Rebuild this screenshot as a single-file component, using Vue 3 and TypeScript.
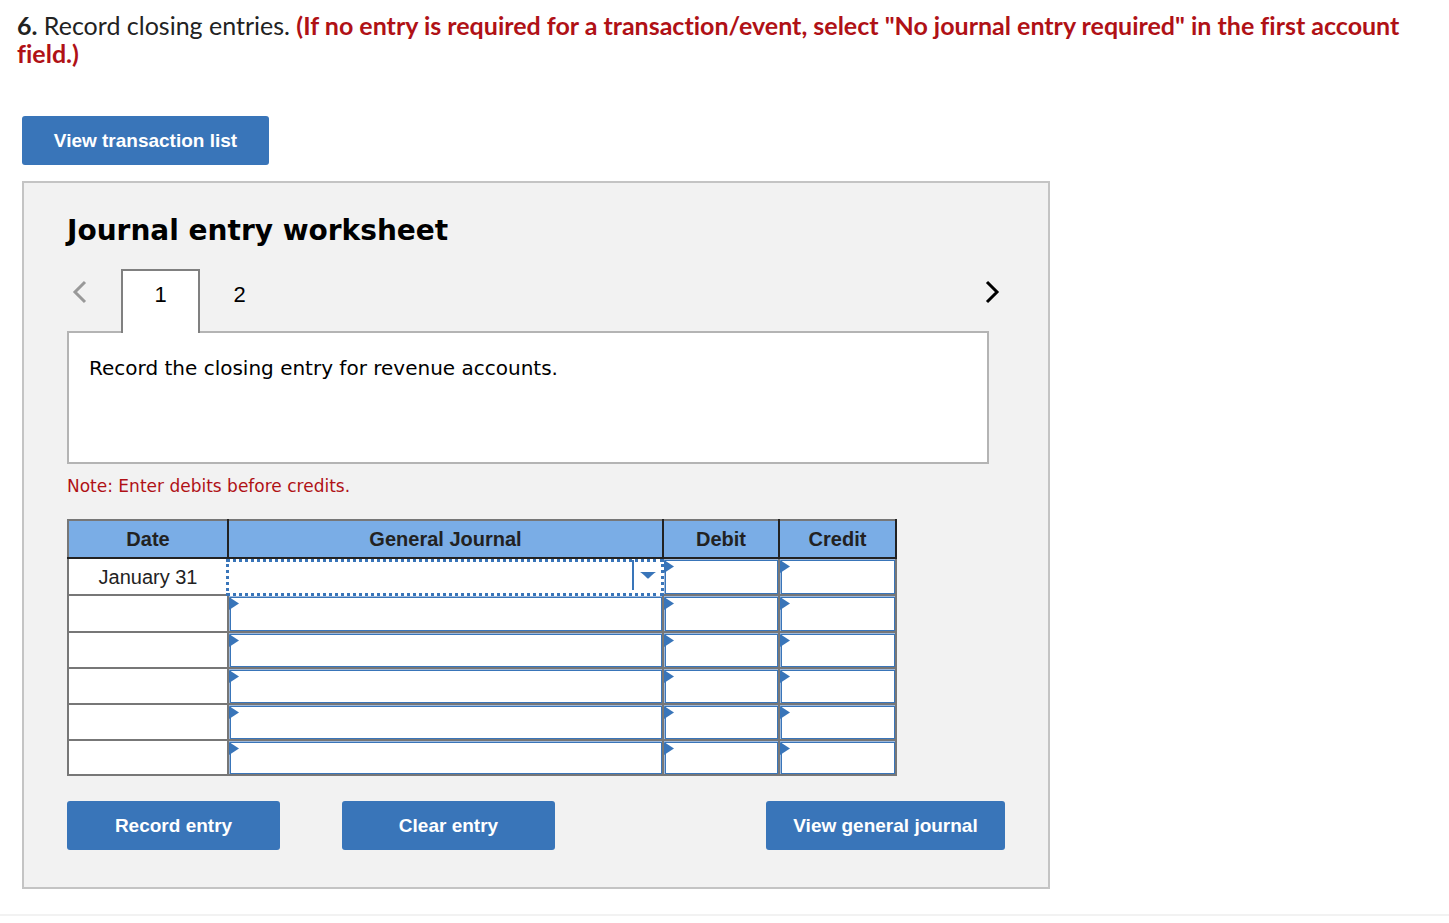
<script setup lang="ts">
import { ref } from 'vue'

const tabs: string[] = ['1', '2']
const activeTab = ref('1')
const dates: string[] = ['January 31', '', '', '', '', '']
const account = ref('')
</script>

<template>
  <main class="page">
    <p class="prompt">
      <b>6.</b> Record closing entries.
      <b class="hint">(If no entry is required for a transaction/event, select "No journal entry required" in the first account field.)</b>
    </p>

    <div class="work">
      <button type="button" class="btn list-btn">View transaction list</button>

      <section class="panel">
        <h1>Journal entry worksheet</h1>

        <nav class="tabs" aria-label="Entries">
          <button type="button" class="arrow prev" aria-label="Previous entry" disabled>
            <svg width="16" height="24" viewBox="0 0 16 24"><path d="M14 2 4 12 14 22" /></svg>
          </button>
          <button
            v-for="tab in tabs"
            :key="tab"
            type="button"
            class="tab"
            :class="{ active: tab === activeTab }"
            @click="activeTab = tab"
          >{{ tab }}</button>
          <button type="button" class="arrow next" aria-label="Next entry">
            <svg width="16" height="24" viewBox="0 0 16 24"><path d="M2 2 12 12 2 22" /></svg>
          </button>
        </nav>

        <div class="description">Record the closing entry for revenue accounts.</div>
        <p class="note">Note: Enter debits before credits.</p>

        <table>
          <colgroup>
            <col class="col-date" /><col /><col class="col-debit" /><col class="col-credit" />
          </colgroup>
          <thead>
            <tr><th>Date</th><th>General Journal</th><th>Debit</th><th>Credit</th></tr>
          </thead>
          <tbody>
            <tr v-for="(date, i) in dates" :key="i">
              <td class="date">{{ date }}</td>
              <td v-if="i === 0" class="entry">
                <div class="picker">
                  <select v-model="account" aria-label="Account, row 1">
                    <option value=""></option>
                    <option>No journal entry required</option>
                  </select>
                  <span class="divider"></span>
                  <svg class="caret" width="16" height="7" viewBox="0 0 16 7"><path d="M0 0H16Q14 1 9 6Q8 7 7 6Q2 1 0 0Z" /></svg>
                </div>
              </td>
              <td v-else class="entry marked"><input type="text" :aria-label="`Account, row ${i + 1}`" /></td>
              <td class="entry marked"><input type="text" :aria-label="`Debit, row ${i + 1}`" /></td>
              <td class="entry marked"><input type="text" :aria-label="`Credit, row ${i + 1}`" /></td>
            </tr>
          </tbody>
        </table>

        <div class="actions">
          <button type="button" class="btn">Record entry</button>
          <button type="button" class="btn">Clear entry</button>
          <button type="button" class="btn journal-btn">View general journal</button>
        </div>
      </section>
    </div>
  </main>
</template>

<style>
body {
  background: #fff;
}
</style>

<style scoped>
.page {
  padding: 11px 16px 25px 17px;
  border-bottom: 2px solid #f2f2f2;
  font-family: "Liberation Sans", Arial, sans-serif;
  color: #222;
}
.prompt {
  margin: 0;
  font: 25px/28px Lato, sans-serif;
  font-variant-ligatures: none;
}
.hint {
  color: #b01116;
}
.work {
  max-width: 1028px;
  margin: 49px 0 0 5px;
}
.btn {
  width: 213px;
  height: 49px;
  padding: 0;
  border: 0;
  border-radius: 3px;
  background: #3975b9;
  color: #fff;
  font: bold 19px/24px "Liberation Sans", Arial, sans-serif;
  cursor: pointer;
}
.list-btn {
  display: block;
  width: 247px;
}
.panel {
  box-sizing: border-box;
  margin-top: 16px;
  padding: 31px 43px 37px;
  border: 2px solid #c4c4c4;
  background: #f2f2f2;
}
h1 {
  margin: 0;
  color: #000;
  font: bold 28px/34px Verdana, "DejaVu Sans", sans-serif;
}
.tabs {
  display: flex;
  margin-top: 21px;
  height: 64px;
}
.arrow {
  display: flex;
  width: 24px;
  height: 46px;
  padding: 0;
  border: 0;
  background: none;
  align-items: center;
  justify-content: center;
}
.arrow path {
  fill: none;
  stroke: #000;
  stroke-width: 3;
}
.prev {
  margin-right: 30px;
}
.prev path {
  stroke: #999;
}
.next {
  margin-left: auto;
}
.tab {
  box-sizing: border-box;
  width: 79px;
  height: 64px;
  padding: 0 0 15px;
  border: 2px solid transparent;
  border-bottom: 0;
  background: none;
  color: #000;
  font: 22px/26px "Liberation Sans", Arial, sans-serif;
}
.tab.active {
  position: relative;
  z-index: 1;
  border-color: #808080;
  background: #fff;
}
.description {
  box-sizing: border-box;
  min-height: 133px;
  margin: -2px 16px 0 0;
  padding: 22px 20px;
  border: 2px solid #b4b4b4;
  background: #fff;
  color: #000;
  font: 20px/26px Verdana, "DejaVu Sans", sans-serif;
}
.note {
  margin: 11px 0 22px;
  color: #b01116;
  font: 17px/22px Verdana, "DejaVu Sans", sans-serif;
}
table {
  width: 100%;
  max-width: 830px;
  table-layout: fixed;
  border-collapse: collapse;
  font-size: 20px;
  line-height: 24px;
}
.col-date {
  width: 160px;
}
.col-debit {
  width: 116px;
}
.col-credit {
  width: 117px;
}
th,
td {
  box-sizing: border-box;
  height: 36px;
  padding: 0;
  border: 2px solid #777;
  background: #fff;
  text-align: center;
}
th {
  height: 38px;
  border-color: #777 #222 #222;
  background: #7aade6;
}
th:first-child {
  border-left-color: #777;
}
tbody tr:nth-child(-n + 2) td {
  height: 37px;
}
tbody tr:last-child td {
  height: 35px;
}
.entry {
  position: relative;
}
.marked {
  padding: 1px 0 0 1px;
  background: #9db9dc;
}
.marked input {
  display: block;
  box-sizing: border-box;
  width: 100%;
  height: 33px;
  padding: 0 10px;
  border: 1px solid #3975b9;
  border-radius: 0;
  background: #fff;
  font: 18px/24px "Liberation Sans", Arial, sans-serif;
}
tbody tr:nth-child(-n + 2) .marked input {
  height: 34px;
}
tbody tr:last-child .marked input {
  height: 32px;
}
.marked::before {
  content: "";
  position: absolute;
  top: 1px;
  left: 0;
  width: 10px;
  height: 13px;
  background: #3975b9;
  clip-path: polygon(0 0, 100% 50%, 0 100%);
}
.picker {
  position: absolute;
  inset: 0 -2px -2px -3px;
  z-index: 1;
  border: 3px dotted #3975b9;
  background: #fff;
}
.picker select {
  display: block;
  width: 100%;
  height: 100%;
  padding: 0 36px 0 8px;
  border: 0;
  appearance: none;
  background: none;
  font: 18px/24px "Liberation Sans", Arial, sans-serif;
}
.divider {
  position: absolute;
  top: -2px;
  right: 27px;
  width: 2px;
  height: 30px;
  background: #3975b9;
}
.caret {
  position: absolute;
  top: 10px;
  right: 5px;
  fill: #3975b9;
}
.actions {
  display: flex;
  margin-top: 25px;
  gap: 62px;
}
.journal-btn {
  width: 239px;
  margin-left: auto;
}
</style>
